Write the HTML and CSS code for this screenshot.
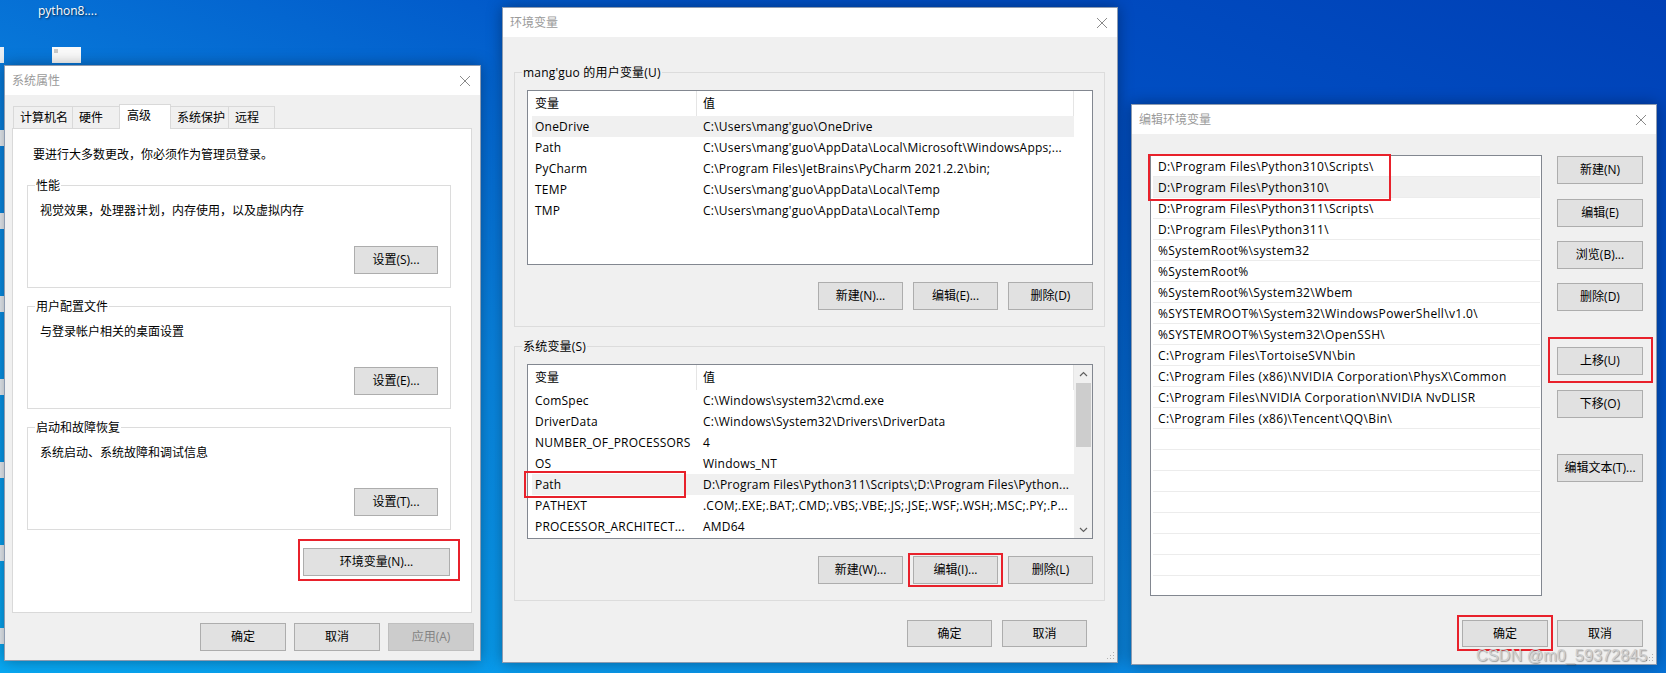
FILE: index.html
```html
<!DOCTYPE html>
<html lang="zh-CN">
  <head>
    <meta charset="UTF-8" />
    <title>环境变量</title>
    <link rel="stylesheet" href="styles.css">
  </head>
  <body>
    <!-- Desktop bits -->
    <div class="desk-edge">
      <span></span><span></span><span></span><span></span>
      <span></span><span></span><span></span><span></span>
    </div>
    <div class="desk-label">python8....</div>
    <div class="desk-chip"><i></i></div>

    <!-- 系统属性 -->
    <div class="win win-sys">
      <div class="titlebar">
        <span>系统属性</span>
        <svg class="close" width="10" height="10" viewBox="0 0 10 10"><path d="M0 0L10 10M10 0L0 10" /></svg>
      </div>
      <div class="sys-body">
        <div class="tabs">
          <div class="tab tab-name">计算机名</div>
          <div class="tab tab-hw">硬件</div>
          <div class="tab tab-adv active">高级</div>
          <div class="tab tab-prot">系统保护</div>
          <div class="tab tab-remote">远程</div>
        </div>
        <div class="panel">
          <p class="intro">要进行大多数更改，你必须作为管理员登录。</p>
          <div class="group">
            <div class="group-title">性能</div>
            <div class="group-text">视觉效果，处理器计划，内存使用，以及虚拟内存</div>
            <button class="btn btn-set">设置(S)...</button>
          </div>
          <div class="group">
            <div class="group-title">用户配置文件</div>
            <div class="group-text">与登录帐户相关的桌面设置</div>
            <button class="btn btn-set">设置(E)...</button>
          </div>
          <div class="group">
            <div class="group-title">启动和故障恢复</div>
            <div class="group-text">系统启动、系统故障和调试信息</div>
            <button class="btn btn-set">设置(T)...</button>
          </div>
          <button class="btn btn-env">环境变量(N)...</button>
        </div>
        <div class="foot sys-foot">
          <button class="btn">确定</button>
          <button class="btn">取消</button>
          <button class="btn disabled">应用(A)</button>
        </div>
      </div>
    </div>

    <!-- 环境变量 -->
    <div class="win win-env">
      <div class="titlebar">
        <span>环境变量</span>
        <svg class="close" width="10" height="10" viewBox="0 0 10 10"><path d="M0 0L10 10M10 0L0 10" /></svg>
      </div>
      <div class="env-body">
        <div class="env-group">
          <div class="group-title">mang'guo 的用户变量(U)</div>
          <div class="list">
            <div class="list-main">
              <div class="list-head"><span>变量</span><span>值</span></div>
              <div class="row hot"><span>OneDrive</span><span>C:\Users\mang'guo\OneDrive</span></div>
              <div class="row"><span>Path</span><span>C:\Users\mang'guo\AppData\Local\Microsoft\WindowsApps;...</span></div>
              <div class="row"><span>PyCharm</span><span>C:\Program Files\JetBrains\PyCharm 2021.2.2\bin;</span></div>
              <div class="row"><span>TEMP</span><span>C:\Users\mang'guo\AppData\Local\Temp</span></div>
              <div class="row"><span>TMP</span><span>C:\Users\mang'guo\AppData\Local\Temp</span></div>
            </div>
            <div class="list-side"></div>
          </div>
          <div class="btn-row">
            <button class="btn">新建(N)...</button>
            <button class="btn">编辑(E)...</button>
            <button class="btn">删除(D)</button>
          </div>
        </div>

        <div class="env-group">
          <div class="group-title">系统变量(S)</div>
          <div class="list">
            <div class="list-main">
              <div class="list-head"><span>变量</span><span>值</span></div>
              <div class="row"><span>ComSpec</span><span>C:\Windows\system32\cmd.exe</span></div>
              <div class="row"><span>DriverData</span><span>C:\Windows\System32\Drivers\DriverData</span></div>
              <div class="row"><span>NUMBER_OF_PROCESSORS</span><span>4</span></div>
              <div class="row"><span>OS</span><span>Windows_NT</span></div>
              <div class="row hot"><span>Path</span><span>D:\Program Files\Python311\Scripts\;D:\Program Files\Python...</span></div>
              <div class="row"><span>PATHEXT</span><span>.COM;.EXE;.BAT;.CMD;.VBS;.VBE;.JS;.JSE;.WSF;.WSH;.MSC;.PY;.P...</span></div>
              <div class="row"><span>PROCESSOR_ARCHITECT...</span><span>AMD64</span></div>
            </div>
            <div class="list-side scroll">
              <div class="arrow"><svg width="9" height="6" viewBox="0 0 9 6"><path d="M1 5L4.5 1.5L8 5" /></svg></div>
              <div class="thumb"></div>
              <div class="arrow arrow-down"><svg width="9" height="6" viewBox="0 0 9 6"><path d="M1 1L4.5 4.5L8 1" /></svg></div>
            </div>
          </div>
          <div class="btn-row">
            <button class="btn">新建(W)...</button>
            <button class="btn">编辑(I)...</button>
            <button class="btn">删除(L)</button>
          </div>
        </div>

        <div class="foot env-foot">
          <button class="btn">确定</button>
          <button class="btn">取消</button>
        </div>
      </div>
      <svg class="grip" width="8" height="8" viewBox="0 0 8 8"><rect x="6" y="0" width="1" height="1"/><rect x="3" y="3" width="1" height="1"/><rect x="6" y="3" width="1" height="1"/><rect x="0" y="6" width="1" height="1"/><rect x="3" y="6" width="1" height="1"/><rect x="6" y="6" width="1" height="1"/></svg>
    </div>

    <!-- 编辑环境变量 -->
    <div class="win win-edit">
      <div class="titlebar">
        <span>编辑环境变量</span>
        <svg class="close" width="10" height="10" viewBox="0 0 10 10"><path d="M0 0L10 10M10 0L0 10" /></svg>
      </div>
      <div class="edit-body">
        <div class="edit-top">
          <div class="edit-list">
            <div class="path-row">D:\Program Files\Python310\Scripts\</div>
            <div class="path-row hot">D:\Program Files\Python310\</div>
            <div class="path-row">D:\Program Files\Python311\Scripts\</div>
            <div class="path-row">D:\Program Files\Python311\</div>
            <div class="path-row">%SystemRoot%\system32</div>
            <div class="path-row">%SystemRoot%</div>
            <div class="path-row">%SystemRoot%\System32\Wbem</div>
            <div class="path-row">%SYSTEMROOT%\System32\WindowsPowerShell\v1.0\</div>
            <div class="path-row">%SYSTEMROOT%\System32\OpenSSH\</div>
            <div class="path-row">C:\Program Files\TortoiseSVN\bin</div>
            <div class="path-row">C:\Program Files (x86)\NVIDIA Corporation\PhysX\Common</div>
            <div class="path-row">C:\Program Files\NVIDIA Corporation\NVIDIA NvDLISR</div>
            <div class="path-row">C:\Program Files (x86)\Tencent\QQ\Bin\</div>
            <div class="path-row"></div>
            <div class="path-row"></div>
            <div class="path-row"></div>
            <div class="path-row"></div>
            <div class="path-row"></div>
            <div class="path-row"></div>
            <div class="path-row"></div>
            <div class="path-row"></div>
          </div>
          <div class="edit-btns">
            <button class="btn">新建(N)</button>
            <button class="btn gap-s">编辑(E)</button>
            <button class="btn gap-s">浏览(B)...</button>
            <button class="btn gap-s">删除(D)</button>
            <button class="btn gap-l">上移(U)</button>
            <button class="btn gap-s">下移(O)</button>
            <button class="btn gap-l">编辑文本(T)...</button>
          </div>
        </div>
        <div class="foot edit-foot">
          <button class="btn">确定</button>
          <button class="btn">取消</button>
        </div>
      </div>
      <svg class="grip" width="8" height="8" viewBox="0 0 8 8"><rect x="6" y="0" width="1" height="1"/><rect x="3" y="3" width="1" height="1"/><rect x="6" y="3" width="1" height="1"/><rect x="0" y="6" width="1" height="1"/><rect x="3" y="6" width="1" height="1"/><rect x="6" y="6" width="1" height="1"/></svg>
    </div>

    <!-- Red annotation boxes -->
    <div class="mark mark-env"></div>
    <div class="mark mark-path"></div>
    <div class="mark mark-edit"></div>
    <div class="mark mark-rows"></div>
    <div class="mark mark-up"></div>
    <div class="mark mark-ok"></div>

    <div class="watermark">CSDN @m0_59372845</div>
  </body>
</html>
```

FILE: styles.css
```css
/* General */
* {
  box-sizing: border-box;
}
body {
  margin: 0;
  width: 1666px;
  height: 673px;
  overflow: hidden;
  position: relative;
  font-family: "Open Sans", "Noto Sans CJK SC", sans-serif;
  font-size: 12px;
  line-height: 16px;
  color: #000;
  background: linear-gradient(to bottom left, #0040b6 0%, #0052c6 30%, #0a84df 62%, #08a8f2 100%);
}
p {
  margin: 0;
}

/* Desktop */
.desk-edge {
  position: absolute;
  left: 0;
  top: 0;
  width: 4px;
  display: flex;
  flex-direction: column;
  gap: 67px;
  padding-top: 47px;
}
.desk-edge span {
  height: 16px;
  background: #e8eef4;
}
.desk-label {
  position: absolute;
  left: 38px;
  top: 3px;
  color: #fff;
  text-shadow: 1px 1px 2px rgba(0, 0, 0, 0.7);
}
.desk-chip {
  position: absolute;
  left: 52px;
  top: 47px;
  width: 29px;
  height: 16px;
  background: #fafafa;
}
.desk-chip i {
  display: block;
  width: 4px;
  height: 4px;
  margin: 2px 0 0 2px;
  background: #c8c8c8;
}

/* Windows */
.win {
  position: absolute;
  display: flex;
  flex-direction: column;
  background: #f0f0f0;
  border: 1px solid #8d9bb0;
  box-shadow: 0 0 14px rgba(0, 0, 0, 0.35);
}
.win-sys {
  left: 4px;
  top: 65px;
  width: 477px;
  height: 596px;
}
.win-env {
  left: 502px;
  top: 7px;
  width: 616px;
  height: 656px;
}
.win-edit {
  left: 1131px;
  top: 104px;
  width: 526px;
  height: 561px;
}
.titlebar {
  flex: none;
  height: 29px;
  background: #fff;
  color: #9a9a9a;
  display: flex;
  align-items: center;
  justify-content: space-between;
  padding: 0 10px 0 7px;
}
.close path {
  stroke: #8a8a8a;
  stroke-width: 1;
}
.grip {
  position: absolute;
  right: 2px;
  bottom: 2px;
  fill: #b0b0b0;
}

/* Buttons */
.btn {
  height: 28px;
  padding: 0;
  border: 1px solid #adadad;
  background: #e1e1e1;
  font: inherit;
  color: #000;
  display: flex;
  align-items: center;
  justify-content: center;
}
.btn.disabled {
  background: #cccccc;
  border-color: #bfbfbf;
  color: #838383;
}
.foot {
  display: flex;
  justify-content: flex-end;
}

/* 系统属性 */
.sys-body {
  flex: 1;
  display: flex;
  flex-direction: column;
  padding: 9px 8px 0 7px;
}
.tabs {
  display: flex;
  align-items: flex-end;
  height: 24px;
  margin-left: 1px;
}
.tab {
  height: 22px;
  line-height: 21px;
  padding-left: 6px;
  margin-right: -1px;
  border: 1px solid #d9d9d9;
  border-bottom: none;
  background: #f0f0f0;
}
.tab.active {
  height: 25px;
  margin-bottom: -1px;
  padding-left: 7px;
  background: #fff;
  position: relative;
  z-index: 1;
}
.tab-name { width: 60px; }
.tab-hw { width: 48px; }
.tab-adv { width: 52px; }
.tab-prot { width: 59px; }
.tab-remote { width: 47px; }
.panel {
  height: 485px;
  background: #fff;
  border: 1px solid #d9d9d9;
  padding: 16px 20px 0 14px;
  display: flex;
  flex-direction: column;
}
.intro {
  line-height: 20px;
  padding-left: 6px;
}
.group {
  height: 103px;
  margin-top: 18px;
  border: 1px solid #dcdcdc;
  padding: 0 12px 13px 12px;
  display: flex;
  flex-direction: column;
}
.intro + .group {
  margin-top: 20px;
}
.group-title {
  align-self: flex-start;
  margin: -8px 0 0 -5px;
  padding: 0 1px;
  line-height: 16px;
  background: #fff;
}
.group-text {
  margin-top: 8px;
  line-height: 18px;
}
.btn-set {
  width: 84px;
  margin-top: auto;
  align-self: flex-end;
}
.btn-env {
  width: 147px;
  margin: 18px 1px 0 0;
  align-self: flex-end;
}
.sys-foot {
  margin: 10px -2px 0 0;
  gap: 8px;
}
.sys-foot .btn {
  width: 86px;
}

/* 环境变量 */
.env-body {
  flex: 1;
  display: flex;
  flex-direction: column;
  padding: 35px 12px 0 11px;
}
.env-group {
  height: 255px;
  border: 1px solid #dcdcdc;
  padding: 0 11px 0 12px;
  display: flex;
  flex-direction: column;
}
.env-group + .env-group {
  margin-top: 19px;
}
.env-group .group-title {
  background: #f0f0f0;
  letter-spacing: 0.2px;
}
.list {
  height: 175px;
  margin-top: 9px;
  border: 1px solid #828790;
  background: #fff;
  display: flex;
  padding-left: 4px;
}
.list-main {
  flex: 1;
  overflow: hidden;
}
.list-side {
  flex: none;
  width: 18px;
}
.list-head,
.row {
  display: grid;
  grid-template-columns: 165px 1fr;
  white-space: nowrap;
}
.list-head {
  height: 25px;
  line-height: 25px;
  border-right: 1px solid #e5e5e5;
}
.list-head span:first-child {
  border-right: 1px solid #e5e5e5;
}
.row {
  height: 21px;
  line-height: 21px;
  letter-spacing: 0.22px;
}
.list-head span,
.row span {
  overflow: hidden;
}
.list-head span:first-child,
.row span:first-child {
  padding-left: 3px;
}
.list-head span:last-child,
.row span:last-child {
  padding-left: 6px;
}
.hot {
  background: #f0f0f0;
}
.scroll {
  background: #f0f0f0;
  display: flex;
  flex-direction: column;
  padding-left: 1px;
}
.arrow {
  height: 17px;
  display: flex;
  align-items: center;
  justify-content: center;
}
.arrow path {
  fill: none;
  stroke: #606060;
  stroke-width: 1.2;
}
.arrow-down {
  margin-top: auto;
}
.thumb {
  height: 64px;
  margin: 1px 1px 0 1px;
  background: #cdcdcd;
}
.btn-row {
  display: flex;
  justify-content: flex-end;
  gap: 10px;
  margin-top: 17px;
}
.btn-row .btn {
  width: 85px;
}
.env-foot {
  margin: 19px 18px 0 0;
  gap: 10px;
}
.env-foot .btn {
  width: 85px;
  height: 27px;
}

/* 编辑环境变量 */
.edit-body {
  flex: 1;
  display: flex;
  flex-direction: column;
  padding: 21px 13px 0 18px;
}
.edit-top {
  display: flex;
  gap: 15px;
}
.edit-list {
  flex: 1;
  height: 441px;
  border: 1px solid #828790;
  background: #fff;
  overflow: hidden;
  padding: 0 1px 0 2px;
}
.path-row {
  height: 21px;
  line-height: 21px;
  padding-left: 5px;
  border-bottom: 1px solid #ececec;
  white-space: nowrap;
  letter-spacing: 0.35px;
}
.edit-btns {
  width: 86px;
  flex: none;
  display: flex;
  flex-direction: column;
  padding-top: 1px;
}
.gap-s {
  margin-top: 15px;
}
.edit-btns .gap-s + .gap-s {
  margin-top: 14px;
}
.gap-l {
  margin-top: 36px;
}
.edit-foot {
  margin-top: 24px;
  gap: 9px;
}
.edit-foot .btn {
  width: 86px;
  height: 27px;
}

/* Annotations */
.mark {
  position: absolute;
  border: 2px solid #e8212b;
}
.mark-env { left: 298px; top: 539px; width: 162px; height: 42px; }
.mark-path { left: 524px; top: 471px; width: 162px; height: 27px; }
.mark-edit { left: 908px; top: 553px; width: 95px; height: 34px; }
.mark-rows { left: 1148px; top: 154px; width: 243px; height: 47px; }
.mark-up { left: 1548px; top: 337px; width: 105px; height: 46px; }
.mark-ok { left: 1457px; top: 615px; width: 96px; height: 36px; }

.watermark {
  position: absolute;
  left: 1476px;
  top: 645px;
  font-family: "Liberation Sans", Arial, sans-serif;
  font-size: 16.3px;
  line-height: 20px;
  color: #cfcfcf;
  text-shadow: 1px 1px 1px rgba(0, 0, 0, 0.35);
}
```
